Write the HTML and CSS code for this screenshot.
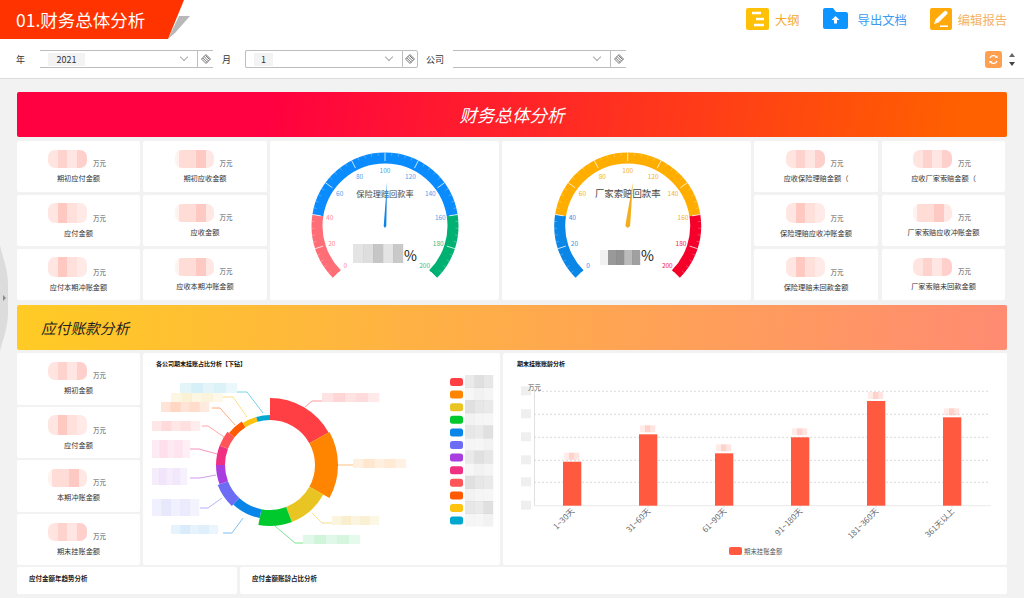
FILE: index.html
```html
<!DOCTYPE html>
<html lang="zh-CN">
<head>
    <meta charset="UTF-8">
    <meta name="viewport" content="width=device-width, initial-scale=1.0">
    <title>财务总体分析</title>
    <link rel="stylesheet" href="styles.css">
</head>
<body>
    <header class="topbar">
        <div class="page-title">
            <svg class="page-title-bg" width="192" height="40" viewBox="0 0 192 40">
                <polygon points="179,16 190,16 175,33 168,39" fill="#b8b8b8"/>
                <polygon points="0,0 184,0 168,39 0,39" fill="#ff3300"/>
            </svg>
            <span class="page-title-text">01.财务总体分析</span>
        </div>
        <div class="actions">
            <a class="action action-yellow">
                <svg width="23" height="22" viewBox="0 0 23 22">
                    <rect width="23" height="22" rx="2" fill="#ffc107"/>
                    <path d="M6 5h9M10 11h8M8 17h10" stroke="#fff" stroke-width="2.4"/>
                </svg>
                <span>大纲</span>
            </a>
            <a class="action action-blue">
                <svg width="25" height="21" viewBox="0 0 25 21">
                    <path d="M0 2a2 2 0 0 1 2-2h8l3 4h10a2 2 0 0 1 2 2v13a2 2 0 0 1-2 2H2a2 2 0 0 1-2-2z" fill="#0f95ff"/>
                    <path d="M12.500 8l4 4h-2.500v3.500h-3V12h-2.500z" fill="#fff"/>
                </svg>
                <span>导出文档</span>
            </a>
            <a class="action action-orange">
                <svg width="22" height="22" viewBox="0 0 22 22">
                    <rect width="22" height="22" rx="2" fill="#ffa90a"/>
                    <path d="M4 16l1.500-4.500L14 3.500a1.800 1.800 0 0 1 3 2.800L8.500 14.500z" fill="#fff"/>
                    <path d="M10 18.200h8" stroke="#fff" stroke-width="1.600"/>
                </svg>
                <span>编辑报告</span>
            </a>
        </div>
    </header>

    <div class="filters">
        <label class="filter-label filter-label-year">年</label>
        <div class="select select-open">
            <div class="select-box"><span class="tag tag-year">2021</span><i class="chevron"></i></div>
            <button class="clear"><svg width="10" height="10" viewBox="0 0 10 10"><path d="M5 .5L.5 5 5 9.500 9.500 5zM3 2.500l4.500 4.500M1.800 4l4.500 4.500M4.500 1.500l4 4" fill="none" stroke="#666" stroke-width=".9"/></svg></button>
        </div>
        <label class="filter-label filter-label-month">月</label>
        <div class="select select-full">
            <div class="select-box"><span class="tag tag-month">1</span><i class="chevron"></i></div>
            <button class="clear"><svg width="10" height="10" viewBox="0 0 10 10"><path d="M5 .5L.5 5 5 9.500 9.500 5zM3 2.500l4.500 4.500M1.800 4l4.500 4.500M4.500 1.500l4 4" fill="none" stroke="#666" stroke-width=".9"/></svg></button>
        </div>
        <label class="filter-label filter-label-company">公司</label>
        <div class="select select-open">
            <div class="select-box"><i class="chevron"></i></div>
            <button class="clear"><svg width="10" height="10" viewBox="0 0 10 10"><path d="M5 .5L.5 5 5 9.500 9.500 5zM3 2.500l4.500 4.500M1.800 4l4.500 4.500M4.500 1.500l4 4" fill="none" stroke="#666" stroke-width=".9"/></svg></button>
        </div>
        <div class="filter-tools">
            <button class="refresh">
                <svg width="11" height="11" viewBox="0 0 11 11"><path d="M2 4a3.700 3.700 0 0 1 6.500-.8M9 7a3.700 3.700 0 0 1-6.500.8" fill="none" stroke="#fff" stroke-width="1.200"/><path d="M9.500 1.200v2.800H6.800zM1.500 9.800V7h2.700z" fill="#fff"/></svg>
            </button>
            <div class="stepper"><i class="step-up"></i><i class="step-down"></i></div>
        </div>
    </div>

    <svg class="side-handle" width="9" height="106" viewBox="0 0 9 106">
        <path d="M0 0C3 14 8 24 8 40V68C8 82 3 94 0 106z" fill="#dcdcdc"/>
        <path d="M3 50l3 3-3 3z" fill="#8a8a8a"/>
    </svg>

    <main class="content">
        <h1 class="banner banner-red">财务总体分析</h1>

        <section class="row-overview">
            <div class="metrics">
                <div class="metric"><div class="value"><span class="blur blur-a"></span><span class="unit">万元</span></div><p>期初应付金额</p></div>
                <div class="metric"><div class="value"><span class="blur blur-b"></span><span class="unit">万元</span></div><p>期初应收金额</p></div>
                <div class="metric"><div class="value"><span class="blur blur-c"></span><span class="unit">万元</span></div><p>应付金额</p></div>
                <div class="metric"><div class="value"><span class="blur blur-b"></span><span class="unit">万元</span></div><p>应收金额</p></div>
                <div class="metric"><div class="value"><span class="blur blur-c"></span><span class="unit">万元</span></div><p>应付本期冲账金额</p></div>
                <div class="metric"><div class="value"><span class="blur blur-b"></span><span class="unit">万元</span></div><p>应收本期冲账金额</p></div>
            </div>
            <div class="card"><svg id="gauge-insurance" class="chart" width="229" height="159"></svg></div>
            <div class="card"><svg id="gauge-factory" class="chart" width="249" height="159"></svg></div>
            <div class="metrics metrics-right">
                <div class="metric"><div class="value"><span class="blur blur-a"></span><span class="unit">万元</span></div><p>应收保险理赔金额（</p></div>
                <div class="metric"><div class="value"><span class="blur blur-a"></span><span class="unit">万元</span></div><p>应收厂家索赔金额（</p></div>
                <div class="metric"><div class="value"><span class="blur blur-c"></span><span class="unit">万元</span></div><p>保险理赔应收冲账金额</p></div>
                <div class="metric"><div class="value"><span class="blur blur-b"></span><span class="unit">万元</span></div><p>厂家索赔应收冲账金额</p></div>
                <div class="metric"><div class="value"><span class="blur blur-c"></span><span class="unit">万元</span></div><p>保险理赔未回款金额</p></div>
                <div class="metric"><div class="value"><span class="blur blur-a"></span><span class="unit">万元</span></div><p>厂家索赔未回款金额</p></div>
            </div>
        </section>

        <h2 class="banner banner-yellow">应付账款分析</h2>

        <section class="row-payable">
            <div class="metrics-column">
                <div class="metric"><div class="value"><span class="blur blur-a"></span><span class="unit">万元</span></div><p>期初金额</p></div>
                <div class="metric"><div class="value"><span class="blur blur-c"></span><span class="unit">万元</span></div><p>应付金额</p></div>
                <div class="metric"><div class="value"><span class="blur blur-b"></span><span class="unit">万元</span></div><p>本期冲账金额</p></div>
                <div class="metric"><div class="value"><span class="blur blur-a"></span><span class="unit">万元</span></div><p>期末挂账金额</p></div>
            </div>
            <div class="card chart-card">
                <h3 class="card-title">各公司期末挂账占比分析【下钻】</h3>
                <svg id="donut" class="chart" width="357" height="192"></svg>
            </div>
            <div class="card chart-card">
                <h3 class="card-title card-title-aging">期末挂账账龄分析</h3>
                <svg id="bars" class="chart" width="504" height="192"></svg>
            </div>
        </section>

        <section class="row-trend">
            <div class="card trend-card"><h3 class="card-title">应付金额年趋势分析</h3></div>
            <div class="card trend-card"><h3 class="card-title">应付金额账龄占比分析</h3></div>
        </section>
    </main>

    <script src="charts.js"></script>
</body>
</html>
```

FILE: styles.css
```css
* {
    box-sizing: border-box;
}

html, body {
    height: 100%;
}

body {
    margin: 0;
    overflow: hidden;
    background: #f2f2f2;
    color: #333;
    font-family: "Noto Sans CJK SC", "Noto Sans", sans-serif;
}

.topbar {
    display: flex;
    justify-content: space-between;
    height: 40px;
    background: #fff;
}

.page-title {
    position: relative;
    width: 192px;
    height: 40px;
}

.page-title-bg {
    position: absolute;
    top: 0;
    left: 0;
}

.page-title-text {
    position: relative;
    display: block;
    padding-left: 16px;
    color: #fff;
    font-size: 17.500px;
    line-height: 39px;
}

.actions {
    display: flex;
    gap: 23px;
    padding: 8px 17px 0 0;
}

.action {
    display: flex;
    align-items: flex-start;
    gap: 6px;
    font-size: 12.300px;
    line-height: 24px;
}

.action-yellow { color: #f2ab2e; }
.action-blue { color: #3a9bf0; }
.action-orange { color: #f6b163; }

.action-blue { gap: 10px; }

.filters {
    display: flex;
    align-items: center;
    height: 39px;
    padding: 0 9px 0 16px;
    background: #fff;
    border-bottom: 1px solid #dcdcdc;
}

.filter-label {
    font-size: 9px;
    color: #333;
}

.filter-label-year { width: 24px; }
.filter-label-month { width: 23px; margin-left: 9px; }
.filter-label-company { width: 27px; margin-left: 8px; }

.select {
    display: flex;
    height: 18px;
}

.select-box {
    position: relative;
    display: flex;
    align-items: center;
    width: 157px;
    padding-left: 8px;
    border-top: 1px solid #bdbdbd;
    border-bottom: 1px solid #bdbdbd;
}

.select-full .select-box {
    border-left: 1px solid #bdbdbd;
    border-radius: 2px 0 0 2px;
}

.tag {
    height: 13px;
    background: #f3f3f3;
    font-size: 9px;
    line-height: 13px;
    text-align: center;
    color: #333;
}

.tag-year { width: 37px; }
.tag-month { width: 19px; }

.chevron {
    position: absolute;
    top: 3px;
    right: 10px;
    width: 6px;
    height: 6px;
    border-right: 1px solid #aaa;
    border-bottom: 1px solid #aaa;
    transform: rotate(45deg);
}

.clear {
    display: flex;
    align-items: center;
    justify-content: center;
    width: 16px;
    padding: 0;
    background: #fff;
    border: 1px solid #bdbdbd;
    border-right: 0;
}

.select-full .clear {
    border-right: 1px solid #bdbdbd;
    border-radius: 0 2px 2px 0;
}

.filter-tools {
    display: flex;
    align-items: center;
    gap: 7px;
    margin-left: auto;
}

.refresh {
    display: flex;
    align-items: center;
    justify-content: center;
    width: 17px;
    height: 17px;
    padding: 0;
    background: #ff9f50;
    border: 0;
    border-radius: 3px;
}

.stepper {
    display: flex;
    flex-direction: column;
    gap: 5px;
}

.step-up, .step-down {
    width: 0;
    height: 0;
    border-left: 3.500px solid transparent;
    border-right: 3.500px solid transparent;
}

.step-up { border-bottom: 4px solid #666; }
.step-down { border-top: 4px solid #444; }

.side-handle {
    position: absolute;
    top: 245px;
    left: 0;
}

.content {
    padding: 13px 17px 0;
}

.banner {
    display: flex;
    align-items: center;
    height: 45px;
    margin: 0;
    border-radius: 2px;
    font-style: italic;
    font-weight: 400;
}

.banner-red {
    justify-content: center;
    margin-bottom: 4px;
    background: linear-gradient(100deg, #ff0040 25%, #ff6000 95%);
    color: #fff;
    font-size: 17.500px;
}

.banner-yellow {
    margin: 5px 0 3px;
    padding-left: 24px;
    background: linear-gradient(95deg, #ffcb24, #ff8b72);
    color: #222;
    font-size: 14.700px;
}

.card, .metric {
    background: #fff;
    border-radius: 2px;
}

.row-overview {
    display: grid;
    grid-template-columns: 250px 229px 249px 251px;
    gap: 3px;
    height: 159px;
}

.metrics {
    display: grid;
    grid-template-columns: 123px 124px;
    grid-template-rows: repeat(3, 1fr);
    gap: 3px;
}

.metrics-right {
    grid-template-columns: 124px 123px;
    column-gap: 4px;
}

.metric {
    display: flex;
    flex-direction: column;
    align-items: center;
    justify-content: center;
    gap: 6px;
}

.metric p {
    margin: 0;
    font-size: 7.200px;
    line-height: 9px;
    color: #333;
}

.value {
    display: flex;
    align-items: flex-end;
    gap: 6px;
    margin-left: -3px;
}

.unit {
    font-size: 6.500px;
    line-height: 9px;
    color: #555;
}

.blur {
    display: block;
    width: 39px;
    height: 18px;
    border-radius: 7px;
    filter: blur(.5px);
}

.blur-a { background: linear-gradient(90deg, #ffe4df 25%, #ffd3cd 25% 50%, #ffe6e2 50% 75%, #ffcfcb 75%); }
.blur-b { background: linear-gradient(90deg, #fff2ef 10%, #ffdcd6 10% 55%, #ffc9c3 55% 80%, #ffe8e4 80%); }
.blur-c { height: 20px; background: linear-gradient(90deg, #ffe6e2 25%, #ffc9c2 25% 50%, #ffe0db 50% 75%, #ffeae7 75%); }

.row-payable {
    display: grid;
    grid-template-columns: 123px 357px 504px;
    gap: 3px;
    height: 212px;
}

.metrics-column {
    display: grid;
    grid-template-rows: repeat(4, 1fr);
    gap: 2px;
}

.chart-card {
    display: flex;
    flex-direction: column;
}

.chart {
    display: block;
}

.card-title {
    height: 20px;
    margin: 0;
    padding: 7px 0 0 13px;
    font-size: 6px;
    font-weight: 700;
    line-height: 8px;
    color: #111;
}

.card-title-aging {
    padding-left: 14px;
}

.row-trend {
    display: grid;
    grid-template-columns: 220px 767px;
    gap: 3px;
    height: 27px;
    margin-top: 2px;
}

.trend-card .card-title {
    padding: 7px 0 0 12px;
    font-size: 6.500px;
    color: #222;
}
```

FILE: charts.js
```js
const SVG_NS = 'http://www.w3.org/2000/svg';

function add(svg, tag, attrs, text) {
    const el = document.createElementNS(SVG_NS, tag);
    Object.keys(attrs).forEach((k) => el.setAttribute(k, attrs[k]));
    if (text !== undefined) {
        el.textContent = text;
    }
    svg.appendChild(el);
    return el;
}

// blurred figures: columns of one colour at different strengths
function mosaic(svg, x, y, w, h, color, strengths) {
    const cw = w / strengths.length;
    strengths.forEach((s, i) => {
        add(svg, 'rect', { x: x + i * cw, y, width: cw + 0.2, height: h, fill: color, 'fill-opacity': s });
    });
}

function polar(cx, cy, r, deg) {
    const a = deg * Math.PI / 180;
    return [cx + r * Math.cos(a), cy - r * Math.sin(a)];
}

function drawGauge(id, opts) {
    const svg = document.getElementById(id);
    svg.setAttribute('viewBox', `${opts.left} 141 ${opts.width} 159`);
    const cx = opts.cx;
    const cy = 226;
    const angle = (v) => 225 - v / 200 * 270;

    opts.bands.forEach((b) => {
        const p1 = polar(cx, cy, 68, angle(b.from));
        const p2 = polar(cx, cy, 68, angle(b.to));
        const large = (b.to - b.from) > 133 ? 1 : 0;
        add(svg, 'path', {
            d: `M${p1[0]} ${p1[1]}A68 68 0 ${large} 1 ${p2[0]} ${p2[1]}`,
            fill: 'none',
            stroke: b.color,
            'stroke-width': 11
        });
    });

    for (let v = 0; v <= 200; v += 4) {
        const major = v % 20 === 0;
        const p1 = polar(cx, cy, 73.5, angle(v));
        const p2 = polar(cx, cy, major ? 65 : 70.5, angle(v));
        add(svg, 'line', {
            x1: p1[0], y1: p1[1], x2: p2[0], y2: p2[1],
            stroke: '#fff',
            'stroke-width': major ? 0.9 : 0.5,
            'stroke-opacity': major ? 0.85 : 0.5
        });
    }

    for (let v = 0; v <= 200; v += 20) {
        const p = polar(cx, cy, 56, angle(v));
        const band = opts.bands.find((b) => v <= b.to);
        add(svg, 'text', {
            x: p[0], y: p[1] + 2.5,
            'text-anchor': 'middle',
            'font-size': 6.5,
            fill: band.label
        }, v);
    }

    add(svg, 'text', {
        x: cx, y: 197,
        'text-anchor': 'middle',
        'font-size': opts.titleSize,
        fill: '#444'
    }, opts.title);

    const a = angle(opts.value);
    const tip = polar(cx, cy, 44, a);
    const l = polar(cx, cy, opts.needle, a + 90);
    const r = polar(cx, cy, opts.needle, a - 90);
    const tail = polar(cx, cy, 2, a + 180);
    add(svg, 'polygon', {
        points: [tip, l, tail, r].map((p) => p.join(',')).join(' '),
        fill: opts.needleColor
    });

    mosaic(svg, opts.blur.x, opts.blur.y, opts.blur.w, opts.blur.h, '#777', opts.blur.cells);
    add(svg, 'text', {
        x: opts.blur.x + opts.blur.w + 1, y: 261,
        'font-size': 14,
        fill: '#222'
    }, '%');
}

drawGauge('gauge-insurance', {
    left: 270, width: 229, cx: 385, value: 102,
    title: '保险理赔回款率', titleSize: 8.2,
    needle: 1.3, needleColor: '#0f85e8',
    blur: { x: 353, y: 244, w: 50, h: 19, cells: [0.2, 0.24, 0.42, 0.2, 0.4] },
    bands: [
        { from: 0, to: 40, color: '#ff6e76', label: '#ff8a90' },
        { from: 40, to: 160, color: '#0a8cff', label: '#4aa5ee' },
        { from: 160, to: 200, color: '#00b173', label: '#3dbb8e' }
    ]
});

drawGauge('gauge-factory', {
    left: 502, width: 249, cx: 627.7, value: 105,
    title: '厂家索赔回款率', titleSize: 9.4,
    needle: 2.4, needleColor: '#f2ae1c',
    blur: { x: 600, y: 250, w: 40, h: 15, cells: [0.1, 0.75, 0.8, 0.5, 0.7] },
    bands: [
        { from: 0, to: 40, color: '#0a86e6', label: '#2a95e8' },
        { from: 40, to: 160, color: '#ffae00', label: '#f5b120' },
        { from: 160, to: 200, color: '#f5002a', label: '#f0234a' }
    ]
});

function drawDonut() {
    const svg = document.getElementById('donut');
    const cx = 270;
    const cy = 465;
    const inner = 45;
    const slices = [
        { from: 0, to: 61, r: 67, color: '#ff3f44' },
        { from: 61, to: 119, r: 68, color: '#ff8400' },
        { from: 119, to: 159, r: 61, color: '#e8c522' },
        { from: 159, to: 191, r: 61, color: '#00c92d' },
        { from: 191, to: 223, r: 54, color: '#0885e8' },
        { from: 223, to: 249, r: 56, color: '#6d6cf5' },
        { from: 249, to: 270, r: 54, color: '#a83ee0' },
        { from: 270, to: 291, r: 54, color: '#f03080' },
        { from: 291, to: 308, r: 54, color: '#ff5558' },
        { from: 308, to: 327, r: 52, color: '#ff5a00' },
        { from: 327, to: 344, r: 50, color: '#ffc20e' },
        { from: 344, to: 360, r: 50, color: '#00a8d0' }
    ];

    slices.forEach((s) => {
        const a1 = polar(cx, cy, s.r, 90 - s.from);
        const a2 = polar(cx, cy, s.r, 90 - s.to);
        const b2 = polar(cx, cy, inner, 90 - s.to);
        const b1 = polar(cx, cy, inner, 90 - s.from);
        add(svg, 'path', {
            d: `M${a1[0]} ${a1[1]}A${s.r} ${s.r} 0 0 1 ${a2[0]} ${a2[1]}L${b2[0]} ${b2[1]}A${inner} ${inner} 0 0 0 ${b1[0]} ${b1[1]}Z`,
            fill: s.color
        });
    });

    // leader lines and blurred names, page coordinates
    const labels = [
        { line: '305,407 312,401 322,401', box: [322, 393, 57, 9], color: '#ff9a9c' },
        { line: '338,465 353,465', box: [353, 459, 53, 9], color: '#ffc48a' },
        { line: '312,513 322,523 332,523', box: [332, 516, 47, 9], color: '#f0d98a' },
        { line: '275,526 295,543 303,543', box: [303, 535, 57, 9], color: '#8fe6a8' },
        { line: '243,518 232,533 223,533', box: [171, 525, 47, 9], color: '#a6d2f5' },
        { line: '222,498 208,508 200,508', box: [152, 499, 47, 17], color: '#c9c8fa' },
        { line: '216,475 200,478 190,478', box: [152, 468, 35, 17], color: '#dcc0f5' },
        { line: '217,454 199,449 190,449', box: [152, 440, 38, 18], color: '#fbb5d2' },
        { line: '224,437 208,426 202,426', box: [152, 421, 48, 10], color: '#ffa8a8' },
        { line: '235,425 220,408 212,408', box: [161, 402, 48, 10], color: '#ff9f70' },
        { line: '247,417 233,397 223,397', box: [171, 393, 52, 9], color: '#f5df9a' },
        { line: '263,413 247,392 237,392', box: [180, 383, 57, 10], color: '#9fdcee' }
    ];
    labels.forEach((l, i) => {
        mosaic(svg, l.box[0], l.box[1], l.box[2], l.box[3], l.color,
            [0.28, 0.42, 0.28, 0.36, 0.22]);
        add(svg, 'polyline', {
            points: l.line,
            fill: 'none',
            stroke: slices[i].color,
            'stroke-width': 0.7,
            'stroke-opacity': 0.75
        });
    });

    slices.forEach((s, i) => {
        const y = 378 + i * 12.6;
        add(svg, 'rect', { x: 450, y, width: 13, height: 8, rx: 2.5, fill: s.color });
        const g = [0.12, 0.05, 0.18, 0.08, 0.14, 0.06];
        mosaic(svg, 465, y - 3, 28, 13, '#555', [g[i % 6], g[(i + 2) % 6], g[(i + 4) % 6]]);
    });
}

function drawBars() {
    const svg = document.getElementById('bars');
    const base = 505.7;

    [391.3, 414.3, 437.3, 460.3, 482.3].forEach((y) => {
        add(svg, 'line', {
            x1: 534, y1: y, x2: 990, y2: y,
            stroke: '#c8c8c8',
            'stroke-width': 0.7,
            'stroke-dasharray': '2 2'
        });
    });
    [391.3, 414.3, 437.3, 460.3, 482.3, 505.7].forEach((y) => {
        add(svg, 'rect', { x: 521, y: y - 5, width: 10, height: 9, fill: '#e4e4e4', 'fill-opacity': 0.6 });
    });

    add(svg, 'line', { x1: 534.5, y1: 389, x2: 534.5, y2: base, stroke: '#d8d8d8', 'stroke-width': 0.8 });
    add(svg, 'line', { x1: 534, y1: base, x2: 991, y2: base, stroke: '#e4e4e4', 'stroke-width': 0.8 });
    add(svg, 'text', { x: 528, y: 390, 'font-size': 6.5, fill: '#555' }, '万元');

    const data = [
        { name: '1~30天', top: 461.7 },
        { name: '31~60天', top: 434.3 },
        { name: '61~90天', top: 453.3 },
        { name: '91~180天', top: 437.3 },
        { name: '181~360天', top: 401 },
        { name: '361天以上', top: 417.3 }
    ];
    data.forEach((d, i) => {
        const x = 563 + i * 76;
        add(svg, 'line', { x1: x + 85, y1: base, x2: x + 85, y2: base + 2, stroke: '#ccc', 'stroke-width': 0.6 });
        add(svg, 'rect', { x, y: d.top, width: 18.3, height: base - d.top, fill: '#ff5a40' });
        mosaic(svg, x + 1, d.top - 9, 15, 7, '#ffb5a8', [0.25, 0.6, 0.35]);
        add(svg, 'text', {
            x: x + 12,
            y: base + 6,
            'text-anchor': 'end',
            'font-size': 8,
            fill: '#666',
            transform: `rotate(-45 ${x + 12} ${base + 6})`
        }, d.name);
    });

    add(svg, 'rect', { x: 729, y: 547, width: 13, height: 8, rx: 2, fill: '#ff5a40' });
    add(svg, 'text', { x: 744, y: 553.5, 'font-size': 6.4, fill: '#555' }, '期末挂账金额');
}

document.getElementById('donut').setAttribute('viewBox', '143 373 357 192');
document.getElementById('bars').setAttribute('viewBox', '503 373 504 192');
drawDonut();
drawBars();
```
